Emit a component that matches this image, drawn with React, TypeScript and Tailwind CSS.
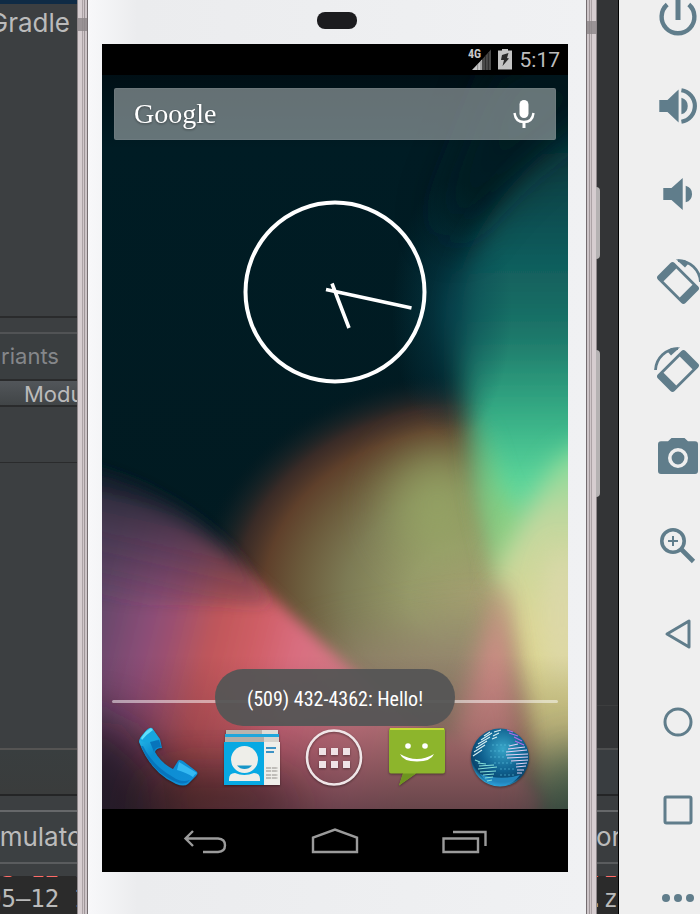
import type { ReactNode } from "react";

function Wallpaper() {
  return (
    <svg className="absolute inset-0 h-full w-full" viewBox="0 0 466 734" preserveAspectRatio="none" aria-hidden="true">
      <defs>
        <filter id="b6" x="-50%" y="-50%" width="200%" height="200%"><feGaussianBlur stdDeviation="7" /></filter>
        <filter id="b14" x="-80%" y="-80%" width="260%" height="260%"><feGaussianBlur stdDeviation="12" /></filter>
        <filter id="b24" x="-100%" y="-100%" width="300%" height="300%"><feGaussianBlur stdDeviation="24" /></filter>
        <linearGradient id="base" x1="0" y1="0" x2="0" y2="1">
          <stop offset="0" stopColor="#000f15" />
          <stop offset="0.1" stopColor="#001c24" />
          <stop offset="1" stopColor="#02191f" />
        </linearGradient>
        <radialGradient id="hill" gradientUnits="userSpaceOnUse" cx="0" cy="0" r="225" gradientTransform="translate(370 520) scale(1.25 1)">
          <stop offset="0" stopColor="#a39f70" />
          <stop offset="0.22" stopColor="#969a69" />
          <stop offset="0.45" stopColor="#7d7b55" />
          <stop offset="0.62" stopColor="#6b5a3b" />
          <stop offset="0.74" stopColor="#5f402b" />
          <stop offset="0.84" stopColor="#472f28" stopOpacity="0.8" />
          <stop offset="0.93" stopColor="#1f2527" stopOpacity="0.4" />
          <stop offset="1" stopColor="#02191f" stopOpacity="0" />
        </radialGradient>
        <linearGradient id="teal" gradientUnits="userSpaceOnUse" x1="0" y1="40" x2="0" y2="500">
          <stop offset="0" stopColor="#042e34" />
          <stop offset="0.28" stopColor="#0d5759" />
          <stop offset="0.47" stopColor="#1b7468" />
          <stop offset="0.65" stopColor="#35ad85" />
          <stop offset="0.8" stopColor="#5bd69b" />
          <stop offset="1" stopColor="#9ed892" />
        </linearGradient>
        <radialGradient id="curtain" gradientUnits="userSpaceOnUse" cx="0" cy="0" r="100" gradientTransform="translate(350 235) scale(0.6 1.3)">
          <stop offset="0" stopColor="#06424f" stopOpacity="0.75" />
          <stop offset="1" stopColor="#06424f" stopOpacity="0" />
        </radialGradient>
        <linearGradient id="slope" gradientUnits="userSpaceOnUse" x1="-20" y1="570" x2="320" y2="655">
          <stop offset="0" stopColor="#5f4668" />
          <stop offset="0.17" stopColor="#8b4e77" />
          <stop offset="0.24" stopColor="#9c5070" />
          <stop offset="0.36" stopColor="#c05759" />
          <stop offset="0.48" stopColor="#cf5e66" />
          <stop offset="0.6" stopColor="#d96e80" />
          <stop offset="0.8" stopColor="#d27e88" />
          <stop offset="1" stopColor="#c4827f" />
        </linearGradient>
        <linearGradient id="dusk" gradientUnits="userSpaceOnUse" x1="30" y1="400" x2="0" y2="530">
          <stop offset="0" stopColor="#101d28" stopOpacity="0.95" />
          <stop offset="0.4" stopColor="#352c3e" stopOpacity="0.6" />
          <stop offset="1" stopColor="#352c3e" stopOpacity="0" />
        </linearGradient>
        <linearGradient id="light" gradientUnits="userSpaceOnUse" x1="0" y1="370" x2="0" y2="740">
          <stop offset="0" stopColor="#7fdc98" />
          <stop offset="0.2" stopColor="#c2d79f" />
          <stop offset="0.5" stopColor="#dcd795" />
          <stop offset="0.8" stopColor="#dbd68c" />
          <stop offset="1" stopColor="#7f9872" />
        </linearGradient>
        <linearGradient id="shade" x1="0" y1="0" x2="0" y2="1">
          <stop offset="0" stopColor="#2a1020" stopOpacity="0" />
          <stop offset="0.45" stopColor="#2a1020" stopOpacity="0.2" />
          <stop offset="1" stopColor="#1c1420" stopOpacity="0.55" />
        </linearGradient>
      </defs>
      <rect width="466" height="734" fill="url(#base)" />
      {/* olive and brown hill */}
      <rect x="40" y="270" width="426" height="464" fill="url(#hill)" />
      <ellipse cx="335" cy="430" rx="50" ry="55" fill="#9aac67" opacity="0.75" filter="url(#b24)" />
      <path d="M210 575 L390 545 L440 760 L240 760Z" fill="#968570" opacity="0.85" filter="url(#b24)" />
      {/* teal and green curtain */}
      <path d="M540 0 C400 90 352 180 352 240 C354 290 364 335 372 375 C380 420 392 470 400 505 L540 505Z" fill="url(#teal)" filter="url(#b14)" />
      <rect x="280" y="90" width="150" height="290" fill="url(#curtain)" />
      <path d="M560 -10 L400 -10 L340 140 L352 170 C400 100 440 70 560 -10Z" fill="#001c24" opacity="0.7" filter="url(#b24)" />
      <path d="M374 340 L400 420 L425 450 L400 500 L382 440Z" fill="#8fcb78" opacity="0.7" filter="url(#b14)" />
      {/* light on the right edge */}
      <path d="M510 350 L455 385 C430 430 412 460 394 498 C412 560 424 640 434 780 L510 780Z" fill="url(#light)" filter="url(#b14)" />
      <ellipse cx="460" cy="540" rx="20" ry="70" fill="#ded9b0" opacity="0.7" filter="url(#b14)" />
      {/* rose wedge */}
      <path d="M398 505 C408 560 420 640 428 760 L310 760 C350 670 376 590 398 505Z" fill="#d48c88" opacity="0.9" filter="url(#b14)" />
      {/* purple, red and pink slope */}
      <path d="M-60 402 C20 409 75 439 120 476 C170 518 225 575 285 625 L440 720 V800 H-60Z" fill="url(#slope)" filter="url(#b6)" />
      <path d="M-60 385 C20 392 80 425 130 474 L170 530 H-60Z" fill="url(#dusk)" filter="url(#b6)" />
      <path d="M-60 640 L20 650 L60 700 L70 780 L-60 780Z" fill="#10131a" opacity="0.75" filter="url(#b24)" />
      <path d="M30 745 L60 700 L170 700 L210 745Z" fill="#3e2216" opacity="0.7" filter="url(#b24)" />
      <ellipse cx="475" cy="735" rx="34" ry="60" fill="#4f8a62" opacity="0.9" filter="url(#b24)" />
      <rect y="580" width="466" height="154" fill="url(#shade)" />
    </svg>
  );
}

function ToolIcon({ label, children }: { label: string; children: ReactNode }) {
  return (
    <button type="button" aria-label={label} className="h-11 w-11 shrink-0 text-[#607d8b]">
      <svg viewBox="-22 -22 44 44" className="block h-11 w-11 overflow-visible" fill="none" stroke="currentColor" strokeWidth="3">
        {children}
      </svg>
    </button>
  );
}

function RotateShape() {
  return (
    <>
      <g transform="translate(0 1) rotate(45)">
        <rect x="-19.5" y="-11.8" width="39" height="23.6" rx="3" fill="currentColor" stroke="none" />
        <rect x="-11.5" y="-9" width="23" height="18" fill="#efefef" stroke="none" />
      </g>
      <path d="M0 -21.4 A22.5 22.5 0 0 1 22.5 0" strokeWidth="2.8" />
      <path d="M-2 -22.8 L7 -14.5 L10.5 -18.5 L7 -22Z" fill="currentColor" stroke="none" />
    </>
  );
}

function Toolbar() {
  return (
    <aside aria-label="Emulator controls" className="flex w-[81px] shrink-0 flex-col overflow-hidden bg-[#efefef] pl-[37px]">
      <div className="-mt-1 flex flex-col gap-11">
        <ToolIcon label="Power">
          <path d="M-10.8 -13.5 A16.4 16.4 0 1 0 10.8 -13.5" strokeWidth="4.4" />
          <path d="M0 -22 V2" strokeWidth="5" />
        </ToolIcon>
        <ToolIcon label="Volume up">
          <path d="M-18.7 -6 H-10.5 L0.6 -16.5 V16.5 L-10.5 6 H-18.7Z" fill="currentColor" stroke="none" />
          <path d="M3.4 -8.3 A8.6 8.6 0 0 1 3.4 8.3Z" fill="currentColor" stroke="none" />
          <path d="M3.4 -15.8 A16 16 0 0 1 3.4 15.8" strokeWidth="4.2" />
        </ToolIcon>
        <ToolIcon label="Volume down">
          <path d="M-14.7 -6 H-6.5 L4.7 -16 V16 L-6.5 6 H-14.7Z" fill="currentColor" stroke="none" />
          <path d="M7.7 -8.3 A8.6 8.6 0 0 1 7.7 8.3Z" fill="currentColor" stroke="none" />
        </ToolIcon>
        <ToolIcon label="Rotate left"><RotateShape /></ToolIcon>
        <ToolIcon label="Rotate right"><g transform="scale(-1 1)"><RotateShape /></g></ToolIcon>
        <ToolIcon label="Take screenshot">
          <path d="M-17 -16.7 H-10 L-6.5 -20 H6.5 L10 -16.7 H17 A3 3 0 0 1 20 -13.7 V13 A3 3 0 0 1 17 16 H-17 A3 3 0 0 1 -20 13 V-13.7 A3 3 0 0 1 -17 -16.7Z" fill="currentColor" stroke="none" />
          <circle r="8.2" stroke="#efefef" strokeWidth="3.6" />
        </ToolIcon>
        <ToolIcon label="Zoom">
          <circle cx="-5" cy="-5" r="11.2" strokeWidth="3.6" />
          <path d="M3.5 3.5 L15.5 15.5" strokeWidth="4.6" />
          <path d="M-10 -5 H0 M-5 -10 V0" strokeWidth="2" />
        </ToolIcon>
        <ToolIcon label="Back"><path d="M-11 0 L11 -13 V13Z" strokeLinejoin="round" /></ToolIcon>
        <ToolIcon label="Home"><circle r="13" /></ToolIcon>
        <ToolIcon label="Overview"><rect x="-13" y="-13" width="26" height="26" rx="1.5" /></ToolIcon>
        <ToolIcon label="More">
          <g fill="currentColor" stroke="none"><circle cx="-12" r="4" /><circle r="4" /><circle cx="12" r="4" /></g>
        </ToolIcon>
      </div>
    </aside>
  );
}

const consoleText = "whitespace-pre font-['DejaVu_Sans_Mono',monospace] text-[24px] leading-[30px]";

function IdeLeft() {
  return (
    <section className="flex w-[77px] shrink-0 flex-col overflow-hidden bg-[#3c3f41] font-[Inter,sans-serif] text-[#bbbbbb]">
      <div className="h-1 shrink-0 bg-[#0f2b45]" />
      <div className="flex h-[312px] shrink-0 justify-end pt-[3px] pr-[7px] text-[26px] leading-8">Gradle</div>
      <div className="h-4 shrink-0 border-t-2 border-[#2a2b2c]" />
      <div className="flex h-[47px] shrink-0 items-center justify-end border-t-2 border-[#515355] bg-[#3a3e40] pr-[18px] text-[22px] text-[#85878a]">
        <span className="whitespace-nowrap">Build Variants</span>
      </div>
      <div className="h-7 shrink-0 border-y-2 border-[#2a2b2c] bg-linear-to-b from-[#52565a] to-[#414547] pl-6 text-[22px] leading-[26px]">Module</div>
      <div className="h-14 shrink-0 border-b border-[#2a2b2c]" />
      <div className="flex-1" />
      <div className="h-12 shrink-0 border-t-2 border-b-2 border-t-[#555453] border-b-[#242526] bg-linear-to-b from-[#393e3f] to-[#3a3c3c]" />
      <div className="h-[14px] shrink-0" />
      <div className="h-[52px] shrink-0 border-t-2 border-[#66686a] bg-[#3c4042] text-[26px] leading-[50px]">
        <span className="-ml-4">Emulator</span>
      </div>
      <div className="h-[14px] shrink-0 border-t-2 border-[#5a5c5e]" />
      <div className="flex h-[38px] shrink-0 flex-col justify-end overflow-hidden bg-[#2b2b2b]">
        <p className={`${consoleText} -ml-[13px] text-[#ff6b68]`}>05–12 1</p>
        <p className={`${consoleText} -ml-[13px]`}>05–12 1</p>
      </div>
    </section>
  );
}

function IdeRight() {
  return (
    <section className="flex w-[22px] shrink-0 flex-col overflow-hidden border-r border-black bg-[#333436] font-[Inter,sans-serif] text-[#bbbbbb]">
      <div className="flex-1" />
      <div className="h-[43px] shrink-0 border-t border-[#3c3d3e]" />
      <div className="h-12 shrink-0 border-t-2 border-b-2 border-t-[#4c4d4e] border-b-[#242526] bg-[#393d40]" />
      <div className="h-[14px] shrink-0 bg-[#3a3d3f]" />
      <div className="h-[52px] shrink-0 border-t-2 border-[#66686a] bg-[#3a3d3f] text-[26px] leading-[50px]">
        <span className="-ml-px">or</span>
      </div>
      <div className="h-[14px] shrink-0 border-t-2 border-[#5a5c5e] bg-[#3a3d3f]" />
      <div className="flex h-[38px] shrink-0 flex-col justify-end overflow-hidden bg-[#2b2b2b]">
        <p className={`${consoleText} -ml-2 text-[#ff6b68]`}>.z</p>
        <p className={`${consoleText} -ml-2`}>.z</p>
      </div>
    </section>
  );
}

function Rail({ flip }: { flip?: boolean }) {
  return (
    <div className={`flex w-[11px] shrink-0 ${flip ? "flex-row-reverse" : ""}`}>
      <div className="w-px bg-[#8f888b]" />
      <div className="w-[4px] bg-[#d6cdd0]" />
      <div className="w-px bg-[#aca3a6]" />
      <div className="w-px bg-[#d0c7ca]" />
      <div className="w-px bg-[#9f9699]" />
      <div className="w-[2px] bg-[#cdc5c8]" />
      <div className="w-px bg-[#746d70]" />
    </div>
  );
}

function StatusBar() {
  return (
    <div className="flex h-[31px] shrink-0 items-center justify-end bg-black pr-2 text-[#bdbdbd]">
      <svg viewBox="0 0 24 24" className="mr-[6px] h-6 w-6" aria-label="4G signal">
        <path d="M4 22 L14 11.5 V22Z" fill="#c8c8c8" />
        <path d="M9.7 16 V22 M13 13 V22" stroke="#777" strokeWidth="0.8" />
        <path d="M14 11.5 L23 1.500 V22 H14Z" fill="#4a4a4a" />
        <path d="M17.500 8 V22 M20.400 5 V22" stroke="#262626" strokeWidth="0.8" />
        <text x="0" y="10" fontSize="12" fontWeight="700" fontFamily="'Roboto Condensed', Roboto, sans-serif" fill="#c8c8c8">4G</text>
      </svg>
      <svg viewBox="0 0 14 22" className="mr-2 h-[22px] w-[14px]" aria-label="Battery charging">
        <path d="M4 0 H10 V1.500 H14 V20.500 H0 V1.500 H4Z" fill="#c4c4c4" />
        <path d="M4 6 L10.500 4 L9 9 L11 9.500 L4.500 17 L6 11 L3 11Z" fill="#2a2a2a" />
      </svg>
      <time className="font-[Roboto,sans-serif] text-[21px] leading-[30px]">5:17</time>
    </div>
  );
}

function DockButton({ label, children }: { label: string; children: ReactNode }) {
  return (
    <button type="button" aria-label={label} className="flex justify-center">
      <svg viewBox="0 0 60 60" className="h-[60px] w-[60px] overflow-visible drop-shadow-[0_1px_1px_rgba(0,0,0,0.4)]">{children}</svg>
    </button>
  );
}

function Dock() {
  return (
    <nav aria-label="Dock" className="grid grid-cols-5 pr-[27px] pb-[22px] pl-[26px]">
      <DockButton label="Phone">
        <defs>
          <linearGradient id="tel" x1="0" y1="0" x2="1" y2="1"><stop offset="0" stopColor="#2cc4ee" /><stop offset="0.35" stopColor="#0a8cd0" /><stop offset="1" stopColor="#1190d8" /></linearGradient>
        </defs>
        <path d="M13 1 L21 12 L23 21 Q17 21 16 25 Q22 36 34 42 L39 34 Q40 32 44 34 L57 44 Q60 46 57 49 L49 57 Q45 60 37 57 Q12 46 0 15 Q0 11 6 5 Q10 0 13 1Z" fill="url(#tel)" />
        <path d="M1 12 Q8 1 13 1 L20 12 L14 15 Q9 17 2 14Z" fill="#16a6df" />
        <path d="M2 11 Q7 3 12 1 L14 3 Q8 7 3 13Z" fill="#5fe0fb" />
        <path d="M40 35 L58 46 Q55 48 54 50 Q48 46 38 43Z" fill="#35b9f2" />
        <path d="M2 19 Q14 47 40 56 Q47 58 51 53 Q42 56 34 50 Q14 39 4 19Z" fill="#0569b0" opacity="0.65" />
        <path d="M11 15 Q18 13 20 13 L22 20 Q16 20 15 25Z" fill="#0874bb" />
      </DockButton>
      <DockButton label="Contacts">
        <rect x="4" y="3" width="52" height="4" fill="#b9b4ae" /><rect x="40" y="3" width="16" height="4" fill="#dedbd6" />
        <rect x="3" y="7" width="54" height="3" fill="#1fa6dc" /><rect x="3" y="10" width="54" height="5" fill="#b3aea9" />
        <rect x="42" y="10" width="15" height="5" fill="#d7d4cf" />
        <rect x="2" y="15" width="40" height="43" fill="#07a9e3" />
        <rect x="42" y="15" width="16" height="43" fill="#efeeea" />
        <ellipse cx="22.500" cy="32.500" rx="13.500" ry="13.500" fill="#eeeee9" />
        <path d="M15 38.500 H30 Q27 42 22.500 42 Q18 42 15 38.500Z" fill="#1595c8" />
        <path d="M7 54 V52 Q7 46 13 46 Q22 50 32 46 Q38 46 38 52 V54Z" fill="#eeeee9" />
        <path d="M44 21 H54 M44 25 H52" stroke="#3d92c4" strokeWidth="2" />
        <path d="M44 41 H56 M44 44 H56 M44 48 H56 M44 51 H56" stroke="#908d89" strokeWidth="1" strokeDasharray="5 0.8" />
      </DockButton>
      <DockButton label="All apps">
        <circle cx="30" cy="30.500" r="27" fill="none" stroke="#f0e6e8" strokeWidth="2.600" />
        <g fill="#efe3e6">
          <rect x="15" y="21" width="7" height="7" /><rect x="27" y="21" width="7" height="7" /><rect x="39" y="21" width="7" height="7" />
          <rect x="15" y="34" width="7" height="7" /><rect x="27" y="34" width="7" height="7" /><rect x="39" y="34" width="7" height="7" />
        </g>
      </DockButton>
      <DockButton label="Messages">
        <path d="M4 1 H56 Q58 1 58 3 V44 Q58 46.500 56 46.500 H29 L12 58.500 L16 46.500 H4 Q2 46.500 2 44 V3 Q2 1 4 1Z" fill="#8db52c" />
        <path d="M16 46.500 H29 L12 58.500Z" fill="#6e9420" />
        <path d="M3 2 H57" stroke="#dbe838" strokeWidth="1.600" />
        <circle cx="21" cy="19" r="2.800" fill="#fff" /><circle cx="38" cy="19" r="2.800" fill="#fff" />
        <path d="M13 27 Q30 37 47 27 Q44 34.500 30 34.500 Q16 34.500 13 27Z" fill="#fff" />
      </DockButton>
      <DockButton label="Browser">
        <defs>
          <radialGradient id="globe" cx="0.55" cy="0.35" r="0.65"><stop offset="0" stopColor="#38a5c8" /><stop offset="0.6" stopColor="#0e5f8e" /><stop offset="0.88" stopColor="#0a456c" /><stop offset="1" stopColor="#2ea4d6" /></radialGradient>
        </defs>
        <circle cx="30" cy="30.500" r="29" fill="url(#globe)" />
        <path d="M10 47 Q30 54 50 48 Q42 59 30 59 Q18 59 10 47Z" fill="#2c9edb" opacity="0.7" />
        <g fill="none" strokeWidth="1.100">
          <path d="M14 9 L20 5 M11 13 L22 6 M8 17 L20 10 M6 21 L17 14 M4 25 L15 18 M3 29 L12 23 M24 5 L31 3 M23 9 L29 6 M22 12 L27 10" stroke="#d6eef2" />
          <path d="M5 33 L10 35 M8 36 L16 37 M9 39 L24 38 M8 42 L27 40 M10 45 L26 44 M13 48 L24 47 M15 51 L23 50 M17 54 L22 53" stroke="#85dfd9" />
          <path d="M37 3 L43 5 M39 6 L48 9 M44 10 L52 14 M45 14 L54 18" stroke="#b56be8" />
          <path d="M39 19 L48 17 M38 22 L55 20 M36 25 L57 23 M36 28 L58 27 M37 31 L58 30 M41 34 L58 33 M46 37 L57 36 M46 40 L56 39 M47 43 L54 43 M47 46 L52 46" stroke="#e3d2f5" />
        </g>
        <path d="M22 18 H42 M20 24 H34 M20 30 H34 M24 36 H42 M30 42 H44 M30 48 H44" stroke="#62c9e6" strokeWidth="0.800" strokeDasharray="2 2" opacity="0.7" />
      </DockButton>
    </nav>
  );
}

function NavBar() {
  return (
    <nav aria-label="System navigation" className="flex h-[63px] shrink-0 items-center justify-center gap-[82px] bg-black pt-[2px] text-[#9b9b9b]">
      <button type="button" aria-label="Back">
        <svg viewBox="0 0 48 28" className="h-7 w-12" fill="none" stroke="currentColor" strokeWidth="2.400">
          <path d="M5 10.500 H37 Q44 11 44 17.300 Q44 23.600 37 24 H22 M12 3 L4.500 10.500 L12 18" />
        </svg>
      </button>
      <button type="button" aria-label="Home">
        <svg viewBox="0 0 48 28" className="h-7 w-12" fill="none" stroke="currentColor" strokeWidth="2.400">
          <path d="M2 24 V9.500 L24 1.500 L46 9.500 V24Z" />
        </svg>
      </button>
      <button type="button" aria-label="Recent apps">
        <svg viewBox="0 0 48 28" className="h-7 w-12" fill="none" stroke="currentColor" strokeWidth="2.400">
          <path d="M2.500 10.500 H37 V24 H2.500Z M12 4 H44.500 V18" />
        </svg>
      </button>
    </nav>
  );
}

function HomeScreen() {
  return (
    <div className="relative flex min-h-0 flex-1 flex-col">
      <Wallpaper />
      <div className="relative mx-3 mt-[13px] flex h-[52px] shrink-0 items-center justify-between rounded-xs border border-white/5 bg-[#a8b0b2]/60 pr-[19px] pl-[19px]">
        <button type="button" className="font-['Liberation_Serif',serif] text-[28px] leading-8 text-white drop-shadow-[0_1px_1px_rgba(0,0,0,0.4)]">Google</button>
        <button type="button" aria-label="Voice search">
          <svg viewBox="0 0 24 30" className="h-[30px] w-6" fill="none" stroke="#fff">
            <path d="M12 5.500 V14.500" strokeWidth="9" strokeLinecap="round" />
            <path d="M2.500 14 Q3.500 23 12 23 Q20.500 23 21.500 14" strokeWidth="2.400" />
            <path d="M12 23 V29" strokeWidth="3" />
          </svg>
        </button>
      </div>
      <svg viewBox="0 0 184 184" className="relative mx-auto mt-[60px] h-[184px] w-[184px] shrink-0" fill="none" stroke="#fff" role="img" aria-label="Clock, 5:17">
        <circle cx="92" cy="92" r="89.500" strokeWidth="4" />
        <path d="M83 89.500 L168.500 108 M89 83.500 L106 128" strokeWidth="3.600" />
      </svg>
      <div className="relative mt-auto">
        <div className="mx-[10px] mb-6 h-[3px] rounded-full bg-white/50" />
        <Dock />
        <div role="status" className="absolute -top-[31px] left-1/2 flex h-[57px] w-60 -translate-x-1/2 items-center justify-center rounded-[28px] bg-[#555555]/95 pt-[2px] font-['Roboto_Condensed','Liberation_Sans_Narrow',Roboto,sans-serif] text-[20px] whitespace-nowrap text-white">
          (509) 432-4362: Hello!
        </div>
      </div>
    </div>
  );
}

function Phone() {
  return (
    <section aria-label="Android emulator" className="relative flex min-w-0 flex-1">
      <Rail />
      <div className="flex min-w-0 flex-1 flex-col bg-linear-to-r from-[#f8f8fa] via-[#ebecee] via-10% to-[#f0f1f3]">
        <div className="flex h-11 shrink-0 items-center justify-center pb-1">
          <div className="h-[17px] w-10 rounded-lg bg-[#1c1c1f]" />
        </div>
        <div className="mr-[18px] ml-[14px] flex min-h-0 flex-1 flex-col">
          <StatusBar />
          <HomeScreen />
          <NavBar />
        </div>
        <div className="h-[42px] shrink-0" />
      </div>
      <Rail flip />
      <div className="absolute top-[18px] left-0 h-[13px] w-[10px] bg-[#8b8587]/80" />
      <div className="absolute top-[21px] right-0 h-[13px] w-[10px] bg-[#8b8587]/80" />
      <div className="absolute top-[187px] -right-[3px] h-[72px] w-1 rounded-r-sm bg-[#b5b2b3]" />
      <div className="absolute top-[350px] -right-[3px] h-[147px] w-1 rounded-r-sm bg-[#b5b2b3]" />
    </section>
  );
}

export default function App() {
  return (
    <main className="flex h-screen overflow-hidden">
      <IdeLeft />
      <Phone />
      <IdeRight />
      <Toolbar />
    </main>
  );
}
